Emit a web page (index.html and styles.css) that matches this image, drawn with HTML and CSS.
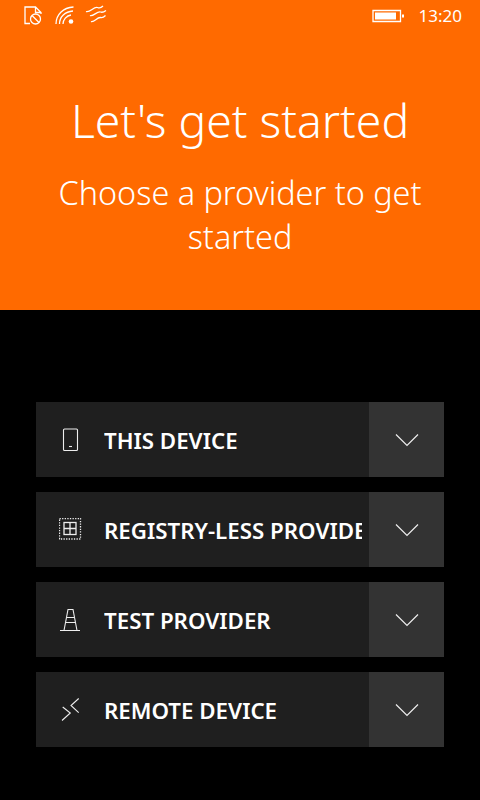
FILE: index.html
```html
<!DOCTYPE html>
<html lang="en">
<head>
<meta charset="utf-8">
<title>Let's get started</title>
<link rel="stylesheet" href="styles.css">
</head>
<body>
<header class="hero">
  <div class="status">
    <div class="status-left">
      <svg class="si" width="19" height="19" viewBox="0 0 19 19" fill="none" stroke="#fff" stroke-width="1.300"><path d="M6 17.500H1V1H11.500L17 6.500V8M11.500 1V6.500H17"/><circle cx="11.500" cy="13" r="5"/><path d="M8 9.500L15 16.500"/></svg>
      <svg class="si wifi" width="20" height="19" viewBox="0 0 20 19" fill="none" stroke="#fff" stroke-width="1.300"><path d="M1 18C1 9 8 1.500 18.500 1M4.500 18C4.500 11 10 5.500 18 5M8 18C8 14 11.500 9.500 16 9"/><circle cx="16" cy="15.500" r="2.300" fill="#fff" stroke="none"/></svg>
      <svg class="si waves" width="22" height="19" viewBox="0 0 22 19" fill="none" stroke="#fff" stroke-width="1.300"><path d="M1 6.500C5 8 9 1 12.500 2.500C14.500 3.500 16 3 18 1M5 10.500C8 12 12 6 15.500 7C17.500 7.800 19 7 21 5.500M6 16.500C9 18 12 12 15.500 12.500C17.500 13 19 12 20.500 10.500"/></svg>
    </div>
    <div class="status-right">
      <svg class="batt" width="32" height="14" viewBox="0 0 32 14"><path d="M1 1.500H28.500V12.500H1Z" fill="none" stroke="#fff" stroke-width="1.300"/><rect x="3" y="3.500" width="21" height="7" fill="#fff"/><rect x="30" y="5.500" width="2" height="3" fill="#fff"/></svg>
      <span class="clock">13:20</span>
    </div>
  </div>
  <h1 class="title">Let's get started</h1>
  <p class="subtitle">Choose a provider to get<br>started</p>
</header>
<main class="list">
  <div class="row">
    <div class="main-btn">
      <span class="icon"><svg width="24" height="24" viewBox="0 0 24 24" fill="none" stroke="#eee" stroke-width="1.100"><rect x="4.500" y="1" width="14" height="21.500" rx="1"/><path d="M10 18.500H13"/></svg></span>
      <span class="label">THIS DEVICE</span>
    </div>
    <div class="chev"><svg width="24" height="14" viewBox="0 0 24 14" fill="none" stroke="#eee" stroke-width="1.200"><path d="M1 1.500L12 12.500L23 1.500"/></svg></div>
  </div>
  <div class="row">
    <div class="main-btn">
      <span class="icon"><svg width="24" height="24" viewBox="0 0 24 24" fill="none" stroke="#eee" stroke-width="1.300"><rect x="0.500" y="0.500" width="21" height="20.500" stroke-dasharray="1.300 1.300"/><rect x="5" y="4.500" width="12" height="12"/><path d="M11 4.500V16.500M5 10.500H17"/></svg></span>
      <span class="label">REGISTRY-LESS PROVIDERS</span>
    </div>
    <div class="chev"><svg width="24" height="14" viewBox="0 0 24 14" fill="none" stroke="#eee" stroke-width="1.200"><path d="M1 1.500L12 12.500L23 1.500"/></svg></div>
  </div>
  <div class="row">
    <div class="main-btn">
      <span class="icon"><svg width="24" height="24" viewBox="0 0 24 24" fill="none" stroke="#eee" stroke-width="1.100"><path d="M1 22.500H21M5 22.500L9 1.500H14L18 22.500M8 9.500H15M7 14.500H16"/></svg></span>
      <span class="label">TEST PROVIDER</span>
    </div>
    <div class="chev"><svg width="24" height="14" viewBox="0 0 24 14" fill="none" stroke="#eee" stroke-width="1.200"><path d="M1 1.500L12 12.500L23 1.500"/></svg></div>
  </div>
  <div class="row">
    <div class="main-btn">
      <span class="icon"><svg width="24" height="24" viewBox="0 0 24 24" fill="none" stroke="#eee" stroke-width="1.100"><path d="M3.700 9L11.300 15L3 22.500M19.700 0.500L12 7.500L19.700 14.700"/></svg></span>
      <span class="label">REMOTE DEVICE</span>
    </div>
    <div class="chev"><svg width="24" height="14" viewBox="0 0 24 14" fill="none" stroke="#eee" stroke-width="1.200"><path d="M1 1.500L12 12.500L23 1.500"/></svg></div>
  </div>
</main>
</body>
</html>
```
FILE: styles.css
```css
* { box-sizing: border-box; }
html, body { margin: 0; height: 100%; }
body {
  width: 480px;
  height: 800px;
  overflow: hidden;
  background: #000;
  color: #fff;
  font-family: "Noto Sans", "Open Sans", sans-serif;
}
.hero {
  height: 310px;
  background: #ff6a00;
  display: flex;
  flex-direction: column;
  align-items: center;
}
.status {
  width: 100%;
  height: 32px;
  padding: 6px 18px 0 24px;
  display: flex;
  justify-content: space-between;
  align-items: flex-start;
}
.status-left { display: flex; gap: 12px; }
.status-left .si { display: block; }
.status-left .waves { margin-left: -2px; margin-top: -1px; }
.status-right { display: flex; align-items: center; gap: 15px; height: 19px; }
.batt { display: block; }
.clock { font-size: 17px; line-height: 19px; }
.title {
  margin: 59px 0 0;
  font-size: 46.3px;
  line-height: 60px;
  font-weight: 300;
}
.subtitle {
  margin: 19px 0 0;
  font-size: 32.4px;
  line-height: 44px;
  font-weight: 300;
  text-align: center;
}
.list {
  padding: 92px 36px 0;
  display: flex;
  flex-direction: column;
  gap: 15px;
}
.row { display: flex; height: 75px; }
.main-btn {
  width: 333px;
  background: #1f1f1f;
  display: flex;
  align-items: center;
  padding: 0 7px 0 23px;
}
.icon { width: 24px; height: 24px; flex: none; margin-right: 21px; }
.icon svg { display: block; }
.label {
  flex: 1;
  min-width: 0;
  padding-top: 2px;
  font-size: 22.3px;
  font-weight: 600;
  white-space: nowrap;
  overflow: hidden;
  line-height: 34px;
}
.chev {
  flex: 1;
  background: #333;
  display: flex;
  align-items: center;
  justify-content: center;
}
.chev svg { display: block; }
```
